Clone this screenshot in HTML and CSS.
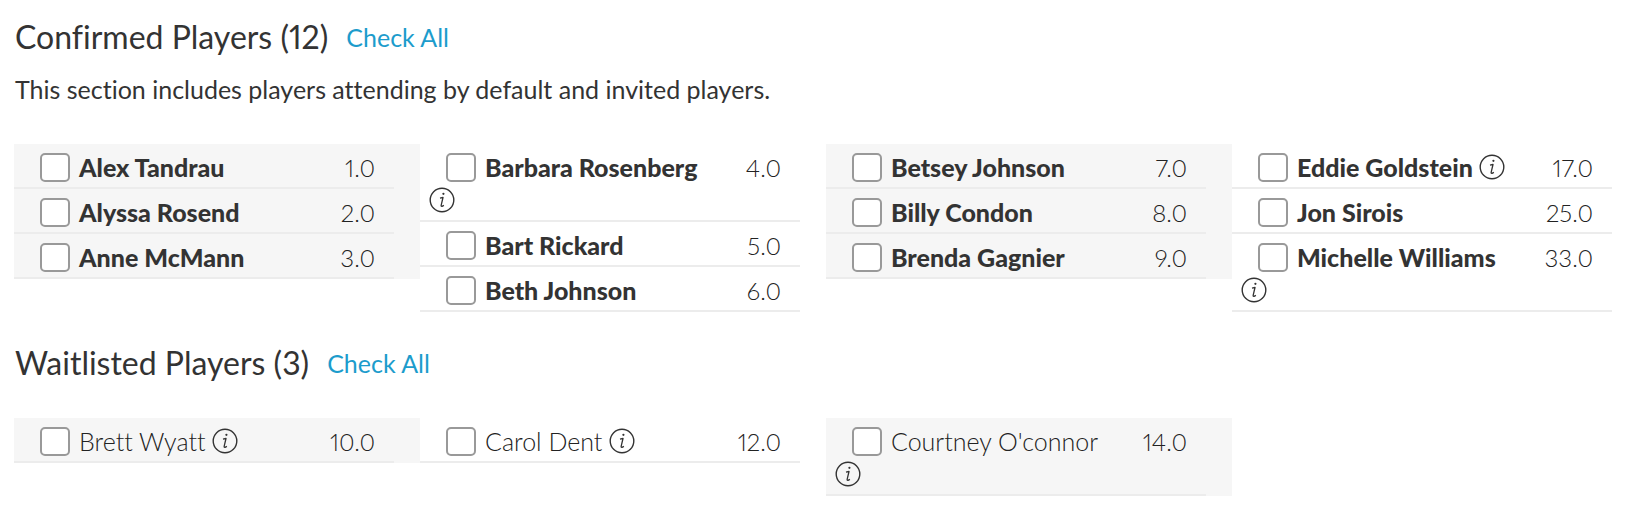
FILE: index.html
```html
<!DOCTYPE html>
<html lang="en">
<head>
    <meta charset="UTF-8">
    <meta name="viewport" content="width=device-width, initial-scale=1.0">
    <title>Players</title>
    <link rel="stylesheet" href="styles.css">
</head>
<body>

    <!-- info icon, reused by every player that has a note -->
    <svg class="sprite" aria-hidden="true">
        <symbol id="icon-info" viewBox="0 0 26 26">
            <circle cx="13" cy="13" r="11.8" fill="none" stroke="currentColor" stroke-width="1.4"/>
            <circle cx="14.4" cy="6.8" r="1.1" fill="currentColor"/>
            <path d="M11 11.2 L14 10.5 L12.2 18.2 Q11.9 19.7 13 19.4 L14.9 18.4" fill="none" stroke="currentColor" stroke-width="1.3" stroke-linejoin="round"/>
        </symbol>
    </svg>

    <section class="players">
        <div class="heading">
            <h2>Confirmed Players (12)</h2>
            <a href="#">Check All</a>
        </div>
        <p class="intro">This section includes players attending by default and invited players.</p>

        <div class="columns confirmed">
            <ul class="column">
                <li><div class="name"><label><input type="checkbox">Alex Tandrau</label></div><span class="rank">1.0</span></li>
                <li><div class="name"><label><input type="checkbox">Alyssa Rosend</label></div><span class="rank">2.0</span></li>
                <li><div class="name"><label><input type="checkbox">Anne McMann</label></div><span class="rank">3.0</span></li>
            </ul>
            <ul class="column">
                <li><div class="name"><label><input type="checkbox">Barbara Rosenberg</label> <button type="button" class="info" aria-label="Info"><svg><use href="#icon-info"/></svg></button></div><span class="rank">4.0</span></li>
                <li><div class="name"><label><input type="checkbox">Bart Rickard</label></div><span class="rank">5.0</span></li>
                <li><div class="name"><label><input type="checkbox">Beth Johnson</label></div><span class="rank">6.0</span></li>
            </ul>
            <ul class="column">
                <li><div class="name"><label><input type="checkbox">Betsey Johnson</label></div><span class="rank">7.0</span></li>
                <li><div class="name"><label><input type="checkbox">Billy Condon</label></div><span class="rank">8.0</span></li>
                <li><div class="name"><label><input type="checkbox">Brenda Gagnier</label></div><span class="rank">9.0</span></li>
            </ul>
            <ul class="column">
                <li><div class="name"><label><input type="checkbox">Eddie Goldstein</label> <button type="button" class="info" aria-label="Info"><svg><use href="#icon-info"/></svg></button></div><span class="rank">17.0</span></li>
                <li><div class="name"><label><input type="checkbox">Jon Sirois</label></div><span class="rank">25.0</span></li>
                <li><div class="name"><label><input type="checkbox">Michelle Williams</label> <button type="button" class="info" aria-label="Info"><svg><use href="#icon-info"/></svg></button></div><span class="rank">33.0</span></li>
            </ul>
        </div>
    </section>

    <section class="players">
        <div class="heading">
            <h2>Waitlisted Players (3)</h2>
            <a href="#">Check All</a>
        </div>

        <div class="columns waitlisted">
            <ul class="column">
                <li><div class="name"><label><input type="checkbox">Brett Wyatt</label> <button type="button" class="info" aria-label="Info"><svg><use href="#icon-info"/></svg></button></div><span class="rank">10.0</span></li>
            </ul>
            <ul class="column">
                <li><div class="name"><label><input type="checkbox">Carol Dent</label> <button type="button" class="info" aria-label="Info"><svg><use href="#icon-info"/></svg></button></div><span class="rank">12.0</span></li>
            </ul>
            <ul class="column">
                <li><div class="name"><label><input type="checkbox">Courtney O'connor</label> <button type="button" class="info" aria-label="Info"><svg><use href="#icon-info"/></svg></button></div><span class="rank">14.0</span></li>
            </ul>
        </div>
    </section>

</body>
</html>
```

FILE: styles.css
```css
body {
    font-family: Lato, sans-serif;
    font-size: 25px;
    font-variant-ligatures: none;
    font-variant-numeric: proportional-nums;
    color: #333;
    background-color: #fff;
    margin: 0;
    padding: 16px 12px 0 14px;
}

.sprite {
    display: none;
}

.heading {
    display: flex;
    align-items: center;
    gap: 18px;
    padding-left: 1px;
}

h2 {
    font-size: 32px;
    font-weight: normal;
    line-height: 42px;
    margin: 0;
}

a {
    color: #1c9ccc;
    text-decoration: none;
}

.intro {
    line-height: 32px;
    margin: 15px 0 0;
    padding-left: 1px;
}

.columns {
    display: grid;
    grid-template-columns: repeat(4, 1fr);
    align-items: start;
}

.confirmed {
    margin: 39px 0 30px;
}

.waitlisted {
    margin-top: 34px;
    font-weight: 300;
}

.column {
    list-style: none;
    margin: 0;
    padding: 0 26px 0 0;
}

.column:nth-child(odd) {
    background-color: #f6f6f6;
}

li {
    display: flex;
    justify-content: space-between;
    box-sizing: border-box;
    min-height: 45px;
    padding: 7px 19px 3px 9px;
    border-bottom: 2px solid #ececec;
    line-height: 33px;
}

.name {
    width: 276px;
}

.confirmed .name {
    font-weight: 900;
}

.waitlisted .name,
.rank {
    color: #222;
}

label {
    display: inline-flex;
    align-items: center;
    vertical-align: top;
    white-space: nowrap;
}

input {
    appearance: none;
    flex: none;
    box-sizing: border-box;
    width: 30px;
    height: 29px;
    margin: 0 9px 0 17px;
    background-color: #fff;
    border: 2px solid #999;
    border-radius: 5px;
}

input:checked {
    background-color: #1c9ccc;
}

.info {
    width: 26px;
    height: 26px;
    margin-top: 3px;
    padding: 0;
    border: none;
    background: none;
    color: #333;
    vertical-align: top;
    cursor: pointer;
}

.info svg {
    display: block;
    width: 26px;
    height: 26px;
}

.rank {
    font-size: 24px;
    font-weight: 300;
}
```
